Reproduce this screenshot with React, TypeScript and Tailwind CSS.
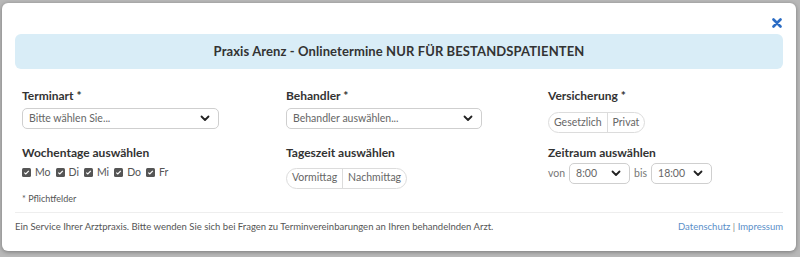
import React from "react";

const Chevron = () => (
  <svg width="10" height="7" viewBox="0 0 10 7" className="shrink-0">
    <path d="M1.5 1.5 L5 5 L8.5 1.5" fill="none" stroke="#222" strokeWidth="1.8" strokeLinecap="round" strokeLinejoin="round" />
  </svg>
);

function Select({ text, className }: { text: string; className: string }) {
  return (
    <div className={`h-[21px] border border-[#cfcfcf] rounded-[5px] bg-white flex items-center justify-between pl-[6px] pr-[8px] ${className}`}>
      <span className="text-[10.5px] text-[#666]">{text}</span>
      <Chevron />
    </div>
  );
}

function Toggle({ items }: { items: string[] }) {
  return (
    <div className="inline-flex h-[21px] border border-[#dcdcdc] rounded-full overflow-hidden">
      {items.map((it, i) => (
        <span
          key={it}
          className={`px-[5px] flex items-center text-[10.5px] text-[#666] ${i > 0 ? "border-l border-[#dcdcdc]" : ""}`}
        >
          {it}
        </span>
      ))}
    </div>
  );
}

const Check = ({ label }: { label: string }) => (
  <span className="flex items-center gap-[4px] mr-[5px]">
    <span className="w-[9px] h-[9px] bg-[#555] rounded-[1.5px] flex items-center justify-center">
      <svg width="7" height="7" viewBox="0 0 7 7">
        <path d="M1.3 3.6 L2.8 5 L5.8 1.8" fill="none" stroke="#fff" strokeWidth="1.2" />
      </svg>
    </span>
    <span className="text-[10.5px] text-[#555]">{label}</span>
  </span>
);

export default function App() {
  return (
    <main
      className="w-[800px] h-[257px] bg-[#b8b8b8] pt-[3px] pl-[2px]"
      style={{ fontFamily: "Lato, 'Open Sans', sans-serif" }}
    >
      {/* Modal */}
      <div className="w-[794px] h-[248px] bg-white rounded-[6px] shadow-[0_1px_4px_rgba(0,0,0,0.35)] px-[13px] relative">
        <div className="h-[31px] flex items-end justify-end pr-[1px] pb-[6px]">
          <svg width="10" height="10" viewBox="0 0 10 10">
            <path d="M1.5 1.5 L8.5 8.5 M8.5 1.5 L1.5 8.5" stroke="#2b6cc4" strokeWidth="2.6" strokeLinecap="round" />
          </svg>
        </div>

        {/* Banner */}
        <div className="h-[35px] bg-[#d9edf7] rounded-[6px] flex items-center justify-center">
          <h2 className="text-[13px] font-bold text-[#333] tracking-[0.1px]">
            Praxis Arenz - Onlinetermine NUR FÜR BESTANDSPATIENTEN
          </h2>
        </div>

        {/* Form */}
        <div className="pl-[7px] pt-[20px] grid grid-cols-[264px_262px_1fr] gap-y-[13px]">
          <div>
            <div className="text-[12px] font-bold text-[#333] leading-[14px] mb-[5px]">Terminart *</div>
            <Select text="Bitte wählen Sie..." className="w-[197px]" />
          </div>
          <div>
            <div className="text-[12px] font-bold text-[#333] leading-[14px] mb-[5px]">Behandler *</div>
            <Select text="Behandler auswählen..." className="w-[196px]" />
          </div>
          <div>
            <div className="text-[12px] font-bold text-[#333] leading-[14px] mb-[5px]">Versicherung *</div>
            <Toggle items={["Gesetzlich", "Privat"]} />
          </div>

          <div>
            <div className="text-[12px] font-bold text-[#333] leading-[14px] mb-[5px]">Wochentage auswählen</div>
            <div className="flex items-center h-[14px]">
              {["Mo", "Di", "Mi", "Do", "Fr"].map((d) => (
                <Check key={d} label={d} />
              ))}
            </div>
            <div className="text-[9px] text-[#555] mt-[13px]">* Pflichtfelder</div>
          </div>
          <div>
            <div className="text-[12px] font-bold text-[#333] leading-[14px] mb-[3px]">Tageszeit auswählen</div>
            <Toggle items={["Vormittag", "Nachmittag"]} />
          </div>
          <div>
            <div className="text-[12px] font-bold text-[#333] leading-[14px] mb-[3px]">Zeitraum auswählen</div>
            <div className="flex items-center gap-[4px] text-[10.5px] text-[#777]">
              <span>von</span>
              <Select text="8:00" className="w-[61px]" />
              <span>bis</span>
              <Select text="18:00" className="w-[61px]" />
            </div>
          </div>
        </div>

        {/* Footer */}
        <div className="mt-[6px] border-t border-[#eee] pt-[7px] flex justify-between text-[9.5px]">
          <span className="text-[#555]">
            Ein Service Ihrer Arztpraxis. Bitte wenden Sie sich bei Fragen zu Terminvereinbarungen an Ihren behandelnden Arzt.
          </span>
          <span className="text-[#5b8fc9]">
            Datenschutz <span className="text-[#888]">|</span> Impressum
          </span>
        </div>
      </div>
    </main>
  );
}
